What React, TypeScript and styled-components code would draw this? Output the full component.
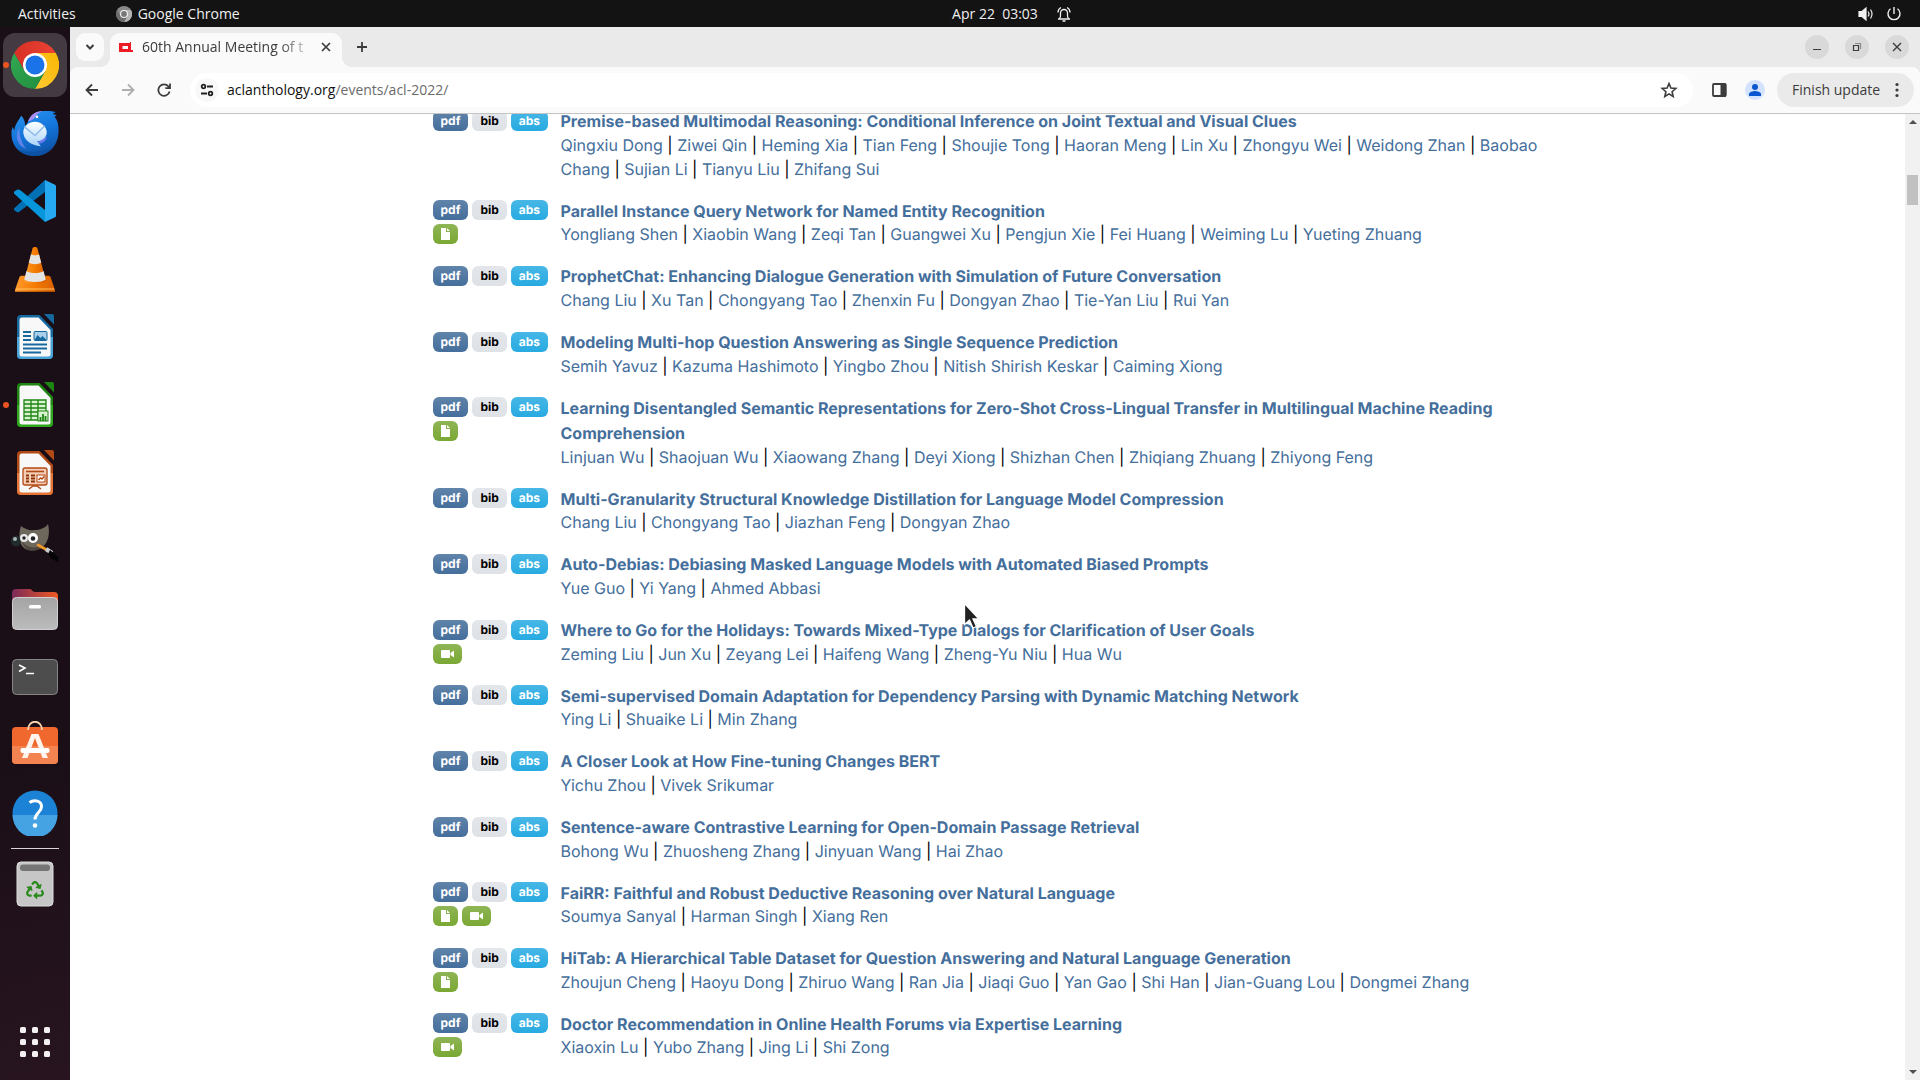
import React from 'react';
import styled, { createGlobalStyle, css } from 'styled-components';
import { FaRecycle } from 'react-icons/fa';

const uiFont = '"Open Sans", "Noto Sans", sans-serif';
const pageFont = 'Inter, "Liberation Sans", sans-serif';

const GlobalStyle = createGlobalStyle`
  *, *::before, *::after { box-sizing: border-box; }
  body { margin: 0; background: #fff; overflow: hidden; }
  button { font: inherit; color: inherit; border: 0; padding: 0; background: none; }
  a { color: inherit; text-decoration: none; }
  svg { display: block; flex: none; }
`;

const Desktop = styled.div`
  display: flex;
  flex-direction: column;
  height: 100vh;
  font-family: ${uiFont};
`;

/* ---------- system bar ---------- */

const SystemBar = styled.header`
  display: grid;
  grid-template-columns: 1fr auto 1fr;
  align-items: center;
  flex: none;
  height: 27px;
  padding: 0 18px;
  background: #131313;
  color: #f0f0f0;
  font-size: 14px;
  line-height: 20px;
`;

const SystemGroup = styled.div<{ $end?: boolean }>`
  display: flex;
  align-items: center;
  gap: ${(p) => (p.$end ? 12 : 40)}px;
  justify-content: ${(p) => (p.$end ? 'flex-end' : 'flex-start')};
`;

const SystemButton = styled.button`
  display: flex;
  align-items: center;
  gap: 6px;
`;

const Clock = styled.button`
  display: flex;
  align-items: center;
  gap: 18px;
  padding-left: 104px;
  white-space: pre;
`;

/* ---------- dock ---------- */

const Workspace = styled.div`
  display: flex;
  flex: 1;
  min-height: 0;
`;

const Dock = styled.nav`
  display: flex;
  flex-direction: column;
  align-items: center;
  flex: none;
  width: 70px;
  padding: 6px 0;
  background: linear-gradient(165deg, #1b0f17 0%, #1b0f17 70%, #27141f 100%);
`;

const DockGroup = styled.div<{ $ruled?: boolean }>`
  display: flex;
  flex-direction: column;
  align-items: center;
  gap: 4px;
  ${(p) =>
    p.$ruled &&
    css`
      width: 48px;
      margin-top: 3px;
      padding-top: 3px;
      border-top: 1px solid #d8d4d6;
    `}
`;

const DockButton = styled.button<{ $active?: boolean; $running?: boolean; $last?: boolean }>`
  position: relative;
  display: grid;
  place-items: center;
  width: 64px;
  height: 64px;
  border-radius: 12px;
  background: ${(p) => (p.$active ? '#443a41' : 'transparent')};
  ${(p) => p.$last && 'margin-top: auto;'}
  ${(p) =>
    p.$running &&
    css`
      &::before {
        content: '';
        position: absolute;
        left: 0;
        top: 29px;
        width: 6px;
        height: 6px;
        border-radius: 50%;
        background: #e95420;
      }
    `}
`;

/* ---------- browser ---------- */

const Browser = styled.section`
  display: flex;
  flex-direction: column;
  flex: 1;
  min-width: 0;
  background: #eaeaea;
`;

const TabStrip = styled.div`
  display: flex;
  flex: none;
  height: 40px;
  padding: 6px 11px 0 6px;
  color: #3c3c3c;
`;

const TabSearch = styled.button`
  display: grid;
  place-items: center;
  width: 28px;
  height: 28px;
  border-radius: 9px;
  background: #fafafa;
`;

const Tab = styled.div`
  position: relative;
  display: flex;
  align-items: center;
  width: 232px;
  height: 34px;
  margin-left: 6px;
  padding: 0 8px 6px 9px;
  border-radius: 10px 10px 0 0;
  background: #fafafa;
  &::before,
  &::after {
    content: '';
    position: absolute;
    bottom: 0;
    width: 10px;
    height: 10px;
  }
  &::before {
    left: -10px;
    background: radial-gradient(circle at 0 0, transparent 10px, #fafafa 10px);
  }
  &::after {
    right: -10px;
    background: radial-gradient(circle at 100% 0, transparent 10px, #fafafa 10px);
  }
`;

const TabTitle = styled.span`
  flex: 1;
  margin-left: 9px;
  overflow: hidden;
  white-space: nowrap;
  font-size: 14px;
  line-height: 20px;
  mask-image: linear-gradient(90deg, #000 78%, transparent 98%);
`;

const IconButton = styled.button<{ $size: number }>`
  display: grid;
  place-items: center;
  flex: none;
  width: ${(p) => p.$size}px;
  height: ${(p) => p.$size}px;
`;

const NewTab = styled(IconButton)`
  margin-left: 6px;
`;

const WindowControls = styled.div`
  display: flex;
  align-items: center;
  gap: 16px;
  height: 28px;
  margin-left: auto;
`;

const WindowButton = styled.button`
  display: grid;
  place-items: center;
  width: 24px;
  height: 24px;
  border-radius: 50%;
  background: #d9d9d9;
`;

const Toolbar = styled.div`
  display: flex;
  align-items: center;
  flex: none;
  height: 47px;
  padding: 0 6px 1px 4px;
  border-bottom: 1px solid #c4c4c4;
  border-radius: 8px 8px 0 0;
  background: #fafafa;
  color: #3c3c3c;
`;

const AddressBar = styled.form`
  display: flex;
  align-items: center;
  flex: 1;
  height: 34px;
  margin: 0 8px;
  padding: 0 6px 0 5px;
  border-radius: 17px;
  background: #fff;
`;

const SiteInfo = styled.button`
  display: grid;
  place-items: center;
  width: 24px;
  height: 24px;
  border-radius: 50%;
  background: #f8f8f8;
  color: #202020;
`;

const Address = styled.a`
  flex: 1;
  margin-left: 8px;
  color: #6b6b6b;
  font-size: 14px;
  line-height: 20px;
  b { color: #111; font-weight: 400; }
`;

const UpdateButton = styled.button`
  display: flex;
  align-items: center;
  justify-content: space-between;
  width: 137px;
  height: 34px;
  margin-left: 4px;
  padding: 0 15px;
  border-radius: 17px;
  background: #eaeaea;
  font-size: 14px;
  line-height: 20px;
`;

/* ---------- page ---------- */

const Viewport = styled.div`
  display: flex;
  flex: 1;
  min-height: 0;
  background: #fff;
`;

const Page = styled.main`
  flex: 1;
  overflow: hidden;
  font: 400 16px/24px ${pageFont};
  text-rendering: geometricPrecision;
  color: #000;
`;

const PaperList = styled.div`
  max-width: 1140px;
  margin: -7px auto 0;
  padding: 0 15px;
`;

const Paper = styled.article`
  display: flex;
  margin-bottom: 16px;
`;

const Badges = styled.div`
  flex: none;
  width: 120px;
  margin-right: 8px;
`;

const tones = {
  primary: ['#6084aa', '#446e9b', '#fff'],
  secondary: ['#e3e6ea', '#dee2e6', '#000'],
  info: ['#47b7e6', '#27aae1', '#fff'],
  success: ['#8fb555', '#7aa834', '#fff'],
};

const Badge = styled.a<{ $tone: keyof typeof tones }>`
  display: inline-block;
  margin-right: 4px;
  padding: 4px 8px;
  border-radius: 6px;
  background: linear-gradient(${(p) => tones[p.$tone][0]}, ${(p) => tones[p.$tone][1]});
  color: ${(p) => tones[p.$tone][2]};
  font-size: 12px;
  font-weight: 700;
  line-height: 12px;
  vertical-align: middle;
  svg { height: 12px; }
`;

const PaperTitle = styled.strong`
  color: #446e9b;
  font-weight: 700;
  a { vertical-align: middle; }
`;

const Author = styled.a`
  color: #446e9b;
`;

const Scrollbar = styled.div`
  display: flex;
  flex-direction: column;
  justify-content: space-between;
  flex: none;
  width: 15px;
  background: #f1f1f1;
`;

const ScrollArrow = styled.button`
  display: grid;
  place-items: center;
  height: 16px;
`;

const ScrollTrack = styled.div`
  flex: 1;
  padding: 45px 2px 0;
`;

const ScrollThumb = styled.div`
  height: 30px;
  background: #c1c1c1;
`;

const Pointer = styled.div`
  position: fixed;
  left: 963px;
  top: 602px;
  pointer-events: none;
`;

/* ---------- icons ---------- */

const ChromeIcon = () => (
  <svg width="48" height="48" viewBox="0 0 48 48">
    <defs>
      <linearGradient id="chR" x1="0" x2="1"><stop stopColor="#d93025" /><stop offset="1" stopColor="#ea4335" /></linearGradient>
      <linearGradient id="chY" x1="1" x2="0" y1="0" y2="1"><stop stopColor="#fbb704" /><stop offset="1" stopColor="#fcc934" /></linearGradient>
      <linearGradient id="chG" x1="1" x2="0" y1="1" y2="0"><stop stopColor="#1e8e3e" /><stop offset="1" stopColor="#34a853" /></linearGradient>
    </defs>
    <path d="M24 12h20.8A24 24 0 0 0 3.200 12L13.600 30 24 24z" fill="url(#chR)" />
    <path d="M34.400 30 24 48A24 24 0 0 0 44.800 12H24v12z" fill="url(#chY)" />
    <path d="M13.600 30 3.200 12A24 24 0 0 0 24 48l10.400-18L24 24z" fill="url(#chG)" />
    <circle cx="24" cy="24" r="12" fill="#fff" />
    <circle cx="24" cy="24" r="9.500" fill="#1a73e8" />
  </svg>
);

const ChromeMono = () => (
  <svg width="16" height="16" viewBox="0 0 16 16">
    <circle cx="8" cy="8" r="8" fill="#8a8a8a" />
    <path d="M8 4h7a8 8 0 0 1-7 12l3.500-6z" fill="#b4b4b4" />
    <path d="M1.100 4A8 8 0 0 0 8 16l3-5-6.500-1z" fill="#6c6c6c" />
    <circle cx="8" cy="8" r="4" fill="#f2f2f2" />
    <circle cx="8" cy="8" r="2.900" fill="#777" />
  </svg>
);

const ThunderbirdIcon = () => (
  <svg width="48" height="48" viewBox="0 -1 48 49">
    <defs>
      <linearGradient id="tb" x1="0" x2=".4" y1="0" y2="1"><stop stopColor="#2a98f4" /><stop offset=".6" stopColor="#1373d9" /><stop offset="1" stopColor="#0f57ae" /></linearGradient>
      <linearGradient id="tbm" x1="0" x2="0" y1="0" y2="1"><stop stopColor="#fff" /><stop offset="1" stopColor="#a9d4fb" /></linearGradient>
    </defs>
    <path d="M10 6c3 3 4 7 4 10 2-2 3-4 3-5C20 4 26 1 33 1c4 0 9 0 12 1l-3 2 4 1-2 2 2 3c2 4 2 8 2 12 0 14-10 25-24 25S0 38 0 24c0-4 1-5 1-7l2 4c0-5 4-10 7-15z" fill="url(#tb)" />
    <path d="M6 40c9 4 29 4 37-4-4 7-11 11-19 11-7 0-14-3-18-7z" fill="#0c4e9e" opacity=".7" />
    <path d="M17 12c2-7 8-11 15-11-5 2-5 3-7 5-2 4-5 5-8 6z" fill="#a78df0" />
    <path d="M8 18c-5 8-3 18 7 22-5-7-7-14-7-22z" fill="#7d8bf0" opacity=".7" />
    <path d="M36 27c0 5-6 9-14 7 6-1 8-3 14-7z" fill="#6b7cf0" />
    <path d="M12 22c1-6 6-10 12-10s12 5 12 11-6 9-10 9l4 5c-10-1-18-6-18-15z" fill="url(#tbm)" />
    <path d="M13 17l11 9 10-10" fill="none" stroke="#8fbcec" strokeWidth="1.500" />
    <circle cx="26" cy="7" r="1.400" fill="#fff" />
  </svg>
);

const CodeIcon = () => (
  <svg width="42" height="42" viewBox="0 0 42 42">
    <path d="M0 28.500 31 0v12L5 32c-1 .5-2 .3-3-.5L0 30z" fill="#0071b5" />
    <path d="M31 42 0 13.500v-1.800l3-2c1-.6 2-.3 3 .4l25 19.800z" fill="#0795dc" />
    <path d="m31 0 9.500 4.500c1 .5 1.500 1 1.500 2v29c0 1-.5 1.600-1.500 2L31 42z" fill="#27a9f2" />
  </svg>
);

const ConeIcon = () => (
  <svg width="40" height="46" viewBox="0 0 42 48">
    <defs><linearGradient id="vlc" x1="0" x2="1"><stop stopColor="#ff9a2e" /><stop offset=".5" stopColor="#f57c00" /><stop offset="1" stopColor="#d96000" /></linearGradient></defs>
    <path d="M7 31h28c1 0 2 .6 2.300 1.500L42 46v2H0v-2l4.700-13.500C5 31.600 6 31 7 31z" fill="url(#vlc)" />
    <path d="M1 45h40" stroke="#ffc36a" />
    <path d="M18.500 4c.8-1.600 4.200-1.600 5 0l9 35c-3 4-20 4-23 0z" fill="url(#vlc)" transform="translate(0 -2)" />
    <path d="m16.800 8.500-2.300 9c3 2 10 2 13 0l-2.300-9c-2 1.500-6.400 1.500-8.400 0z" fill="#e4e4e4" />
    <path d="M12 26l-2.300 9c4 3.500 18.600 3.500 22.600 0L30 26c-4 3-14 3-18 0z" fill="#e4e4e4" />
  </svg>
);

const OfficeIcon = ({ dark, light, children }: { dark: string; light: string; children: React.ReactNode }) => (
  <svg width="38" height="46" viewBox="0 0 38 46">
    <path d="M5 1h18.500L37 15v26a4 4 0 0 1-4 4H5a4 4 0 0 1-4-4V5a4 4 0 0 1 4-4z" fill={dark} />
    <path d="M1 23h36v18a4 4 0 0 1-4 4H5a4 4 0 0 1-4-4z" fill={light} />
    <path d="M6 3.500h16.500L34.500 16v24a2.500 2.500 0 0 1-2.500 2.500H6A2.500 2.500 0 0 1 3.500 40V6A2.500 2.500 0 0 1 6 3.500z" fill="#f8f8f8" />
    <path d="M28 0h8a2 2 0 0 1 2 2v8.500z" fill={dark} />
    {children}
  </svg>
);

const WriterIcon = () => (
  <OfficeIcon dark="#15699f" light="#4aa3d6">
    <path d="M7 18h8M7 22h8M7 26h8M7 30.500h24M7 34.500h24M7 38.500h18" stroke="#15699f" strokeWidth="2" />
    <rect x="18" y="17.500" width="13" height="9" rx="1" fill="#a9cfe8" stroke="#15699f" />
    <path d="m18.500 26 3-5 3 3 2-2 4 4z" fill="#15699f" />
  </OfficeIcon>
);

const CalcIcon = () => (
  <OfficeIcon dark="#1e8512" light="#2fa81f">
    <path d="M8 18h22v20H8zM8 22h22M8 26h22M8 30h22M8 34h22M15 18v20M22 18v20" fill="#d9f2d0" stroke="#1e8512" strokeWidth="1.300" />
    <rect x="22" y="29" width="10" height="10" fill="#d9f2d0" stroke="#1e8512" />
    <path d="M24.500 39v-4M27 39v-7M29.500 39v-5" stroke="#1e8512" strokeWidth="1.800" />
  </OfficeIcon>
);

const ImpressIcon = () => (
  <OfficeIcon dark="#b24a16" light="#e37537">
    <rect x="7" y="18" width="24" height="17" rx="2" fill="#f6cdb5" stroke="#b24a16" strokeWidth="1.300" />
    <path d="M10 21.500h18" stroke="#b24a16" strokeWidth="1.600" />
    <path d="M10 25.500h3M15 25.500h4M10 28.500h3M15 28.500h4M10 31.500h3M15 31.500h4" stroke="#8c3408" strokeWidth="1.800" />
    <rect x="21" y="25" width="8" height="7" fill="#fff" stroke="#b24a16" />
    <path d="m22.500 30 2-2 1.500 1 2-2.500M13 39l4-3h4l4 3" fill="none" stroke="#b24a16" strokeWidth="1.500" />
  </OfficeIcon>
);

const GimpIcon = () => (
  <svg width="48" height="42" viewBox="0 0 48 42">
    <path d="M10 6c4 3 9 5 13 4 6 0 11-2 14-6 2 8 1 17-5 23-5 4-13 5-19 1-5-4-6-13-3-22z" fill="#6d675c" />
    <path d="M11 21c4 7 14 9 22 3-4 6-10 8-15 6-3-1-6-4-7-9z" fill="#4d483f" />
    <ellipse cx="5" cy="21" rx="5" ry="5.500" fill="#222b2b" />
    <circle cx="4" cy="19" r="2" fill="#a8b4b4" />
    <circle cx="13" cy="18" r="4" fill="#e8e8e8" />
    <circle cx="22" cy="18" r="5" fill="#fff" />
    <circle cx="13" cy="18" r="1.700" fill="#222" />
    <circle cx="22" cy="18.500" r="2.300" fill="#222" />
    <path d="m27 25 9 5" stroke="#f0982c" strokeWidth="2.600" strokeLinecap="round" />
    <path d="m35 29 6 4" stroke="#c9ccd0" strokeWidth="4.500" />
    <path d="m39 30 8 7c1 2 0 4 1 5-4-1-8-3-11-8z" fill="#050505" />
  </svg>
);

const FilesIcon = () => (
  <svg width="46" height="42" viewBox="0 0 46 42">
    <defs>
      <linearGradient id="fl" x1="0" x2="1"><stop stopColor="#7b2a58" /><stop offset="1" stopColor="#ef5a24" /></linearGradient>
      <linearGradient id="flb" x1="0" x2="0" y1="0" y2="1"><stop stopColor="#a4a4a4" /><stop offset="1" stopColor="#bcbcbc" /></linearGradient>
    </defs>
    <path d="M4 1h14c2 0 2 3 5 3h19a4 4 0 0 1 4 4v8H0V5a4 4 0 0 1 4-4z" fill="url(#fl)" />
    <rect x=".5" y="9.500" width="45" height="32" rx="4" fill="url(#flb)" stroke="#cfcfcf" />
    <rect x="17" y="17" width="12" height="3.500" rx="1.500" fill="#fff" />
  </svg>
);

const TerminalIcon = () => (
  <svg width="46" height="38" viewBox="0 0 46 38">
    <rect x=".5" y="1.500" width="45" height="35" rx="4" fill="#4d4d4d" stroke="#858585" />
    <path d="m7 7 6 3-6 3.500M14 15.500h8" fill="none" stroke="#fff" strokeWidth="1.600" />
  </svg>
);

const SoftwareIcon = () => (
  <svg width="46" height="48" viewBox="0 0 46 48">
    <rect y="6" width="46" height="37" rx="4" fill="#f0682e" />
    <path d="M0 25h46v14a4 4 0 0 1-4 4H4a4 4 0 0 1-4-4z" fill="#f38350" />
    <path d="M16 9c0-11 14-11 14 0" fill="none" stroke="#f7d3b0" strokeWidth="1.800" />
    <path d="M10 37 19.500 13h7L36 37h-5.500L23 17l-7.500 20z" fill="#fff3ec" />
    <rect x="8.500" y="27" width="29" height="5" rx="2" fill="#fff" />
  </svg>
);

const HelpIcon = () => (
  <svg width="46" height="46" viewBox="0 0 46 46">
    <circle cx="23" cy="23" r="22.500" fill="#1c82d6" />
    <path d="M.5 25h45a22.500 22.500 0 0 1-45 0z" fill="#45a3e4" />
    <path d="M17.500 12.500c5-3.500 12-1.500 12 4 0 6-6.500 6-6.500 13" fill="none" stroke="#fff" strokeWidth="3" />
    <circle cx="23" cy="35.500" r="2.300" fill="#fff" />
  </svg>
);

const TrashIcon = () => (
  <svg width="38" height="46" viewBox="0 0 38 46">
    <rect x="1" y="1" width="36" height="44" rx="4" fill="#c6c6c6" stroke="#dedede" />
    <rect x="4" y="3.500" width="30" height="6.500" rx="3" fill="#757575" />
    <FaRecycle x="10" y="20" size={18} color="#2b8a1d" />
  </svg>
);

const AppsIcon = () => (
  <svg width="30" height="30" viewBox="0 0 30 30" fill="#f2f0f1">
    {[0, 12, 24].map((y) => [0, 12, 24].map((x) => <rect key={`${x}-${y}`} x={x} y={y} width="6" height="6" rx="1.500" />))}
  </svg>
);

const Stroke = ({ size, w = 2, children }: { size: number; w?: number; children: React.ReactNode }) => (
  <svg width={size} height={size} viewBox={`0 0 ${size} ${size}`} fill="none" stroke="currentColor" strokeWidth={w}>
    {children}
  </svg>
);

const FileIcon = () => (
  <svg width="9" height="12" viewBox="0 0 9 12" fill="#fff"><path d="M0 0h5v4h4v8H0zM6 0l3 3H6z" /></svg>
);

const VideoIcon = () => (
  <svg width="13" height="12" viewBox="0 0 13 12" fill="#fff"><path d="M1 2h7a1 1 0 0 1 1 1v6a1 1 0 0 1-1 1H1a1 1 0 0 1-1-1V3a1 1 0 0 1 1-1zM9.500 5 13 2.500v7L9.500 7z" /></svg>
);

/* ---------- data ---------- */

type Extra = 'file' | 'video';
type Entry = { title: string; authors: string; extras?: Extra[] };

const papers: Entry[] = [
  { title: 'Premise-based Multimodal Reasoning: Conditional Inference on Joint Textual and Visual Clues', authors: 'Qingxiu Dong, Ziwei Qin, Heming Xia, Tian Feng, Shoujie Tong, Haoran Meng, Lin Xu, Zhongyu Wei, Weidong Zhan, Baobao Chang, Sujian Li, Tianyu Liu, Zhifang Sui' },
  { title: 'Parallel Instance Query Network for Named Entity Recognition', authors: 'Yongliang Shen, Xiaobin Wang, Zeqi Tan, Guangwei Xu, Pengjun Xie, Fei Huang, Weiming Lu, Yueting Zhuang', extras: ['file'] },
  { title: 'ProphetChat: Enhancing Dialogue Generation with Simulation of Future Conversation', authors: 'Chang Liu, Xu Tan, Chongyang Tao, Zhenxin Fu, Dongyan Zhao, Tie-Yan Liu, Rui Yan' },
  { title: 'Modeling Multi-hop Question Answering as Single Sequence Prediction', authors: 'Semih Yavuz, Kazuma Hashimoto, Yingbo Zhou, Nitish Shirish Keskar, Caiming Xiong' },
  { title: 'Learning Disentangled Semantic Representations for Zero-Shot Cross-Lingual Transfer in Multilingual Machine Reading Comprehension', authors: 'Linjuan Wu, Shaojuan Wu, Xiaowang Zhang, Deyi Xiong, Shizhan Chen, Zhiqiang Zhuang, Zhiyong Feng', extras: ['file'] },
  { title: 'Multi-Granularity Structural Knowledge Distillation for Language Model Compression', authors: 'Chang Liu, Chongyang Tao, Jiazhan Feng, Dongyan Zhao' },
  { title: 'Auto-Debias: Debiasing Masked Language Models with Automated Biased Prompts', authors: 'Yue Guo, Yi Yang, Ahmed Abbasi' },
  { title: 'Where to Go for the Holidays: Towards Mixed-Type Dialogs for Clarification of User Goals', authors: 'Zeming Liu, Jun Xu, Zeyang Lei, Haifeng Wang, Zheng-Yu Niu, Hua Wu', extras: ['video'] },
  { title: 'Semi-supervised Domain Adaptation for Dependency Parsing with Dynamic Matching Network', authors: 'Ying Li, Shuaike Li, Min Zhang' },
  { title: 'A Closer Look at How Fine-tuning Changes BERT', authors: 'Yichu Zhou, Vivek Srikumar' },
  { title: 'Sentence-aware Contrastive Learning for Open-Domain Passage Retrieval', authors: 'Bohong Wu, Zhuosheng Zhang, Jinyuan Wang, Hai Zhao' },
  { title: 'FaiRR: Faithful and Robust Deductive Reasoning over Natural Language', authors: 'Soumya Sanyal, Harman Singh, Xiang Ren', extras: ['file', 'video'] },
  { title: 'HiTab: A Hierarchical Table Dataset for Question Answering and Natural Language Generation', authors: 'Zhoujun Cheng, Haoyu Dong, Zhiruo Wang, Ran Jia, Jiaqi Guo, Yan Gao, Shi Han, Jian-Guang Lou, Dongmei Zhang', extras: ['file'] },
  { title: 'Doctor Recommendation in Online Health Forums via Expertise Learning', authors: 'Xiaoxin Lu, Yubo Zhang, Jing Li, Shi Zong', extras: ['video'] },
];

const PaperRow = ({ title, authors, extras = [] }: Entry) => (
  <Paper>
    <Badges>
      <Badge href="#" $tone="primary">pdf</Badge>
      <Badge href="#" $tone="secondary">bib</Badge>
      <Badge href="#" $tone="info">abs</Badge>
      {extras.length > 0 && <br />}
      {extras.map((kind) => (
        <Badge key={kind} href="#" $tone="success" aria-label={kind}>
          {kind === 'file' ? <FileIcon /> : <VideoIcon />}
        </Badge>
      ))}
    </Badges>
    <div>
      <PaperTitle><a href="#">{title}</a></PaperTitle>
      <br />
      {authors.split(', ').map((name, i) => (
        <React.Fragment key={name}>
          {i > 0 && ' | '}
          <Author href="#">{name}</Author>
        </React.Fragment>
      ))}
    </div>
  </Paper>
);

const dockApps = [
  { name: 'Google Chrome', icon: <ChromeIcon />, active: true, running: true },
  { name: 'Thunderbird', icon: <ThunderbirdIcon /> },
  { name: 'Visual Studio Code', icon: <CodeIcon /> },
  { name: 'VLC', icon: <ConeIcon /> },
  { name: 'Writer', icon: <WriterIcon /> },
  { name: 'Calc', icon: <CalcIcon />, running: true },
  { name: 'Impress', icon: <ImpressIcon /> },
  { name: 'GIMP', icon: <GimpIcon /> },
  { name: 'Files', icon: <FilesIcon /> },
  { name: 'Terminal', icon: <TerminalIcon /> },
  { name: 'Software', icon: <SoftwareIcon /> },
  { name: 'Help', icon: <HelpIcon /> },
];

export default function App() {
  return (
    <Desktop>
      <GlobalStyle />
      <SystemBar>
        <SystemGroup>
          <SystemButton>Activities</SystemButton>
          <SystemButton><ChromeMono />Google Chrome</SystemButton>
        </SystemGroup>
        <Clock>
          {'Apr 22  03:03'}
          <Stroke size={16} w={1.3}>
            <path d="M2 13h12M3.500 12.500C5 11 4.500 9 4.500 7a3.500 3.500 0 0 1 7 0c0 2-.5 4 1 5.500M2 6.500C2 4 3 2.500 5 1.500M14 6.500C14 4 13 2.500 11 1.500M6.500 15h3" />
          </Stroke>
        </Clock>
        <SystemGroup $end>
          <SystemButton aria-label="Volume">
            <Stroke size={16} w={1.2}>
              <path d="M1 5.500h3L8 2v12L4 10.500H1z" fill="currentColor" />
              <path d="M10 5.500q2 2.500 0 5M12.500 3.500q3 4.500 0 9" />
            </Stroke>
          </SystemButton>
          <SystemButton aria-label="Power">
            <Stroke size={16} w={1.4}><path d="M8 1v7M4.500 2.800a6 6 0 1 0 7 0" /></Stroke>
          </SystemButton>
        </SystemGroup>
      </SystemBar>

      <Workspace>
        <Dock aria-label="Dock">
          <DockGroup>
            {dockApps.map((app) => (
              <DockButton key={app.name} aria-label={app.name} $active={app.active} $running={app.running}>{app.icon}</DockButton>
            ))}
          </DockGroup>
          <DockGroup $ruled>
            <DockButton aria-label="Trash"><TrashIcon /></DockButton>
          </DockGroup>
          <DockButton aria-label="Show applications" $last><AppsIcon /></DockButton>
        </Dock>

        <Browser>
          <TabStrip>
            <TabSearch aria-label="Search tabs">
              <Stroke size={10} w={2}><path d="m1.500 3 3.500 3.500L8.500 3" /></Stroke>
            </TabSearch>
            <Tab>
              <svg width="14" height="10" viewBox="0 0 14 10"><path fillRule="evenodd" d="M0 1h11V0h1v8h2v2H0zM3.500 4v3H9V4z" fill="#ed1c24" /></svg>
              <TabTitle>60th Annual Meeting of t</TabTitle>
              <IconButton $size={16} aria-label="Close tab">
                <Stroke size={10} w={1.7}><path d="m1 1 8 8M9 1 1 9" /></Stroke>
              </IconButton>
            </Tab>
            <NewTab $size={28} aria-label="New tab">
              <Stroke size={12} w={1.8}><path d="M6 1v10M1 6h10" /></Stroke>
            </NewTab>
            <WindowControls>
              <WindowButton aria-label="Minimize"><Stroke size={10} w={1}><path d="M1 7.500h8" /></Stroke></WindowButton>
              <WindowButton aria-label="Restore">
                <Stroke size={10} w={1.2}><path d="M1.500 3.500h5v5h-5z" /><path d="M3 1.500h5.500V7" opacity=".5" /></Stroke>
              </WindowButton>
              <WindowButton aria-label="Close"><Stroke size={10} w={1.4}><path d="m1 1 8 8M9 1 1 9" /></Stroke></WindowButton>
            </WindowControls>
          </TabStrip>

          <Toolbar>
            <IconButton $size={36} aria-label="Back"><Stroke size={14} w={1.8}><path d="M13 7H2M7 1.500 1.500 7 7 12.500" /></Stroke></IconButton>
            <IconButton $size={36} aria-label="Forward"><Stroke size={14} w={1.8}><path d="M1 7h11M7 1.500 12.500 7 7 12.500" opacity=".4" /></Stroke></IconButton>
            <IconButton $size={36} aria-label="Reload">
              <Stroke size={14} w={1.8}><path d="M12.600 8.500A5.700 5.700 0 1 1 11.500 3.500L12.500 5M13 .5V5.200H8.300" /></Stroke>
            </IconButton>
            <AddressBar>
              <SiteInfo type="button" aria-label="Site information">
                <Stroke size={14} w={1.8}>
                  <circle cx="3.500" cy="3.500" r="1.800" /><circle cx="10.500" cy="10.500" r="1.800" />
                  <path d="M7 3.500h6M1 10.500h6" />
                </Stroke>
              </SiteInfo>
              <Address href="#"><b>aclanthology.org</b>/events/acl-2022/</Address>
              <IconButton $size={36} type="button" aria-label="Bookmark">
                <Stroke size={18} w={1.6}><path d="m9 2.500 1.900 4.600 4.900.4-3.700 3.200 1.100 4.800L9 12.900l-4.200 2.600 1.100-4.800-3.700-3.200 4.900-.4z" /></Stroke>
              </IconButton>
            </AddressBar>
            <IconButton $size={36} aria-label="Side panel">
              <svg width="16" height="16" viewBox="0 0 16 16"><rect x="2" y="2" width="12.500" height="12" rx="1" fill="none" stroke="currentColor" strokeWidth="1.800" /><path d="M9.500 1h4a2 2 0 0 1 2 2v10a2 2 0 0 1-2 2h-4z" fill="currentColor" /></svg>
            </IconButton>
            <IconButton $size={36} aria-label="Profile">
              <svg width="20" height="20" viewBox="0 0 20 20"><circle cx="10" cy="10" r="10" fill="#d3e3fd" /><circle cx="10" cy="7" r="3" fill="#0b57d0" /><path d="M4 16v-2c0-2 4-3 6-3s6 1 6 3v2z" fill="#0b57d0" /></svg>
            </IconButton>
            <UpdateButton>
              Finish update
              <svg width="4" height="16" viewBox="0 0 4 16" fill="currentColor"><circle cx="2" cy="2.500" r="1.600" /><circle cx="2" cy="8" r="1.600" /><circle cx="2" cy="13.500" r="1.600" /></svg>
            </UpdateButton>
          </Toolbar>

          <Viewport>
            <Page>
              <PaperList>
                {papers.map((paper) => <PaperRow key={paper.title} {...paper} />)}
              </PaperList>
            </Page>
            <Scrollbar>
              <ScrollArrow aria-label="Scroll up"><svg width="8" height="4" viewBox="0 0 8 4"><path d="m4 0 4 4H0z" fill="#505050" /></svg></ScrollArrow>
              <ScrollTrack><ScrollThumb /></ScrollTrack>
              <ScrollArrow aria-label="Scroll down"><svg width="8" height="4" viewBox="0 0 8 4"><path d="m4 4 4-4H0z" fill="#505050" /></svg></ScrollArrow>
            </Scrollbar>
          </Viewport>
        </Browser>
      </Workspace>

      <Pointer>
        <svg width="18" height="28" viewBox="0 0 18 28"><path d="M1.500 1.500v21l5-4.500 3.500 8 3.500-1.500-3.500-7.500h6z" fill="#222" stroke="#fff" strokeWidth="1.300" /></svg>
      </Pointer>
    </Desktop>
  );
}
